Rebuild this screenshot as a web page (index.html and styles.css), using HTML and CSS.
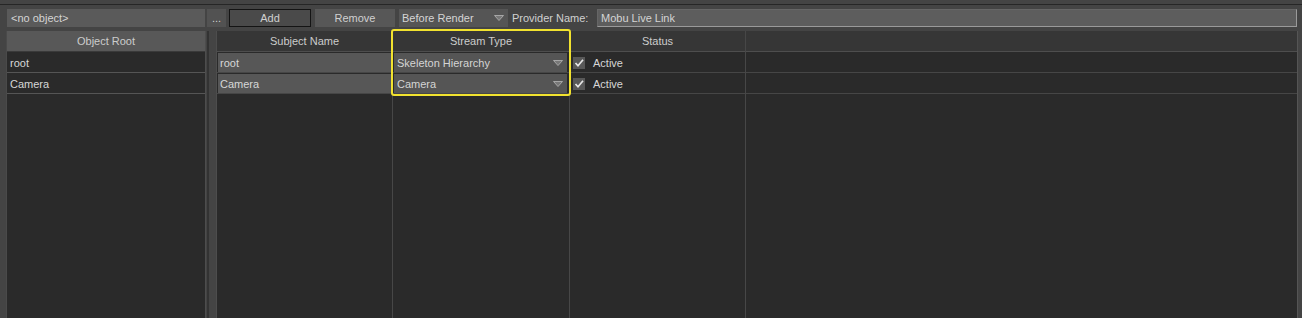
FILE: index.html
```html
<!DOCTYPE html>
<html lang="en">
<head>
  <meta charset="UTF-8">
  <title>Live Link Subjects</title>
  <link rel="stylesheet" href="styles.css">
</head>
<body>

<div class="window">
  <div class="toolbar">
    <div class="field object-field">&lt;no object&gt;</div>
    <div class="btn dots">...</div>
    <div class="btn add-btn">Add</div>
    <div class="btn remove-btn">Remove</div>
    <div class="btn combo timing">
      <span>Before Render</span>
      <svg class="arrow" width="10" height="6" viewBox="0 0 10 6"><polygon points="0.5,0.5 9.5,0.5 5,5.5" /></svg>
    </div>
    <div class="label">Provider Name:</div>
    <div class="field provider">Mobu Live Link</div>
  </div>

  <div class="panes">
    <div class="roots">
      <div class="roots-head">Object Root</div>
      <div class="row"><span class="text">root</span></div>
      <div class="row"><span class="text">Camera</span></div>
    </div>

    <div class="splitter"><div class="grip"></div></div>

    <div class="subjects">
      <div class="col col-name">
        <div class="head">Subject Name</div>
        <div class="cell"><div class="edit">root</div></div>
        <div class="cell"><div class="edit">Camera</div></div>
      </div>
      <div class="col col-type">
        <div class="head">Stream Type</div>
        <div class="cell">
          <div class="combo">
            <span>Skeleton Hierarchy</span>
            <svg class="arrow" width="10" height="6" viewBox="0 0 10 6"><polygon points="0.5,0.5 9.5,0.5 5,5.5" /></svg>
          </div>
        </div>
        <div class="cell">
          <div class="combo">
            <span>Camera</span>
            <svg class="arrow" width="10" height="6" viewBox="0 0 10 6"><polygon points="0.5,0.5 9.5,0.5 5,5.5" /></svg>
          </div>
        </div>
      </div>
      <div class="col col-status">
        <div class="head">Status</div>
        <div class="cell">
          <span class="check"><svg width="12" height="12" viewBox="0 0 12 12"><polyline points="2.5,6 5,8.8 10,2.8" /></svg></span>
          <span class="text">Active</span>
        </div>
        <div class="cell">
          <span class="check"><svg width="12" height="12" viewBox="0 0 12 12"><polyline points="2.5,6 5,8.8 10,2.8" /></svg></span>
          <span class="text">Active</span>
        </div>
      </div>
      <div class="col col-rest">
        <div class="head"></div>
        <div class="cell"></div>
        <div class="cell"></div>
      </div>

      <!-- focus frame around the stream type column -->
      <div class="highlight"></div>
    </div>
  </div>
</div>

</body>
</html>
```

FILE: styles.css
```css
* {
  box-sizing: border-box;
}

body {
  margin: 0;
  background: #444444;
  font-family: "Liberation Sans", Arial, sans-serif;
  font-size: 11px;
  color: #d6d6d6;
  width: 1302px;
  height: 318px;
  overflow: hidden;
}

.window {
  margin-top: 4px;
  border-top: 1px solid #262626;
  height: 314px;
  padding: 4px 0 0 7px;
  display: flex;
  flex-direction: column;
}

/* toolbar */

.toolbar {
  display: flex;
  height: 18px;
  align-items: stretch;
}

.field,
.btn {
  line-height: 18px;
  white-space: nowrap;
}

.field {
  background: #5a5a5a;
  padding: 0 4px;
  color: #d4d4d4;
}

.object-field {
  width: 198px;
}

.btn {
  background: #575757;
  text-align: center;
  color: #d0d0d0;
}

.dots {
  width: 19px;
  margin-left: 2px;
  background: #525252;
}

.add-btn {
  width: 82px;
  margin-left: 3px;
  background: #4a4a4a;
  border: 1px solid #141414;
  line-height: 16px;
}

.remove-btn {
  width: 80px;
  margin-left: 4px;
}

.timing {
  width: 109px;
  margin-left: 4px;
}

.label {
  margin-left: 4px;
  width: 85px;
  line-height: 18px;
  color: #d0d0d0;
}

.provider {
  flex: 1;
  margin-right: 5px;
  background: #5d5d5d;
  border-top: 1px solid #666666;
  border-left: 1px solid #666666;
  border-right: 1px solid #9a9a9a;
  border-bottom: 1px solid #9a9a9a;
  line-height: 16px;
  padding-left: 3px;
}

/* combo boxes */

.combo {
  display: flex;
  align-items: center;
  justify-content: space-between;
  background: #555555;
  padding: 0 4px 0 3px;
  text-align: left;
  color: #d4d4d4;
}

.arrow polygon {
  fill: #777777;
  stroke: #a6a6a6;
  stroke-width: 1;
}

/* panes */

.panes {
  flex: 1;
  display: flex;
  margin-top: 4px;
  margin-left: -1px;
  margin-right: 4px;
}

.roots {
  width: 200px;
  background: #2a2a2a;
  border-left: 1px solid #4a4a4a;
  border-right: 1px solid #4d4d4d;
}

.roots-head {
  height: 21px;
  line-height: 20px;
  background: #585858;
  border-bottom: 1px solid #3a3a3a;
  text-align: center;
  color: #cccccc;
}

.row {
  height: 21px;
  line-height: 18px;
  padding-top: 2px;
  border-bottom: 1px solid #555555;
  padding-left: 3px;
}

.splitter {
  width: 10px;
  padding-left: 1px;
}

.grip {
  width: 2px;
  height: 100%;
  background: #333333;
}

.subjects {
  flex: 1;
  position: relative;
  display: flex;
  background: #2a2a2a;
  border-left: 1px solid #4d4d4d;
  border-right: 1px solid #555555;
}

.col {
  border-right: 1px solid #474747;
}

.col-name {
  width: 176px;
}

.col-type {
  width: 177px;
}

.col-status {
  width: 176px;
}

.col-rest {
  flex: 1;
  border-right: none;
}

.head {
  height: 21px;
  line-height: 20px;
  background: #363636;
  border-bottom: 1px solid #4e4e4e;
  text-align: center;
  color: #cccccc;
}

.cell {
  height: 21px;
  border-bottom: 1px solid #464646;
  padding: 1px 1px 0;
  display: flex;
  align-items: stretch;
}

.edit {
  flex: 1;
  background: #575757;
  line-height: 18px;
  padding-top: 1px;
  padding-left: 2px;
}

.col-type .combo {
  flex: 1;
  line-height: 18px;
  padding-top: 1px;
  margin-right: 1px;
}

.col-status .cell {
  align-items: center;
  padding-left: 3px;
  padding-top: 1px;
}

.check {
  width: 12px;
  height: 12px;
  background: #585858;
  display: flex;
}

.check polyline {
  fill: none;
  stroke: #e6e6e6;
  stroke-width: 1.7;
}

.col-status .text {
  margin-left: 8px;
  line-height: 18px;
  padding-top: 1px;
}

/* yellow focus frame, drawn over the grid */

.highlight {
  position: absolute;
  left: 174px;
  top: -2px;
  width: 180px;
  height: 67px;
  border: 2px solid #f1e22f;
  border-radius: 3px;
  pointer-events: none;
}
```
